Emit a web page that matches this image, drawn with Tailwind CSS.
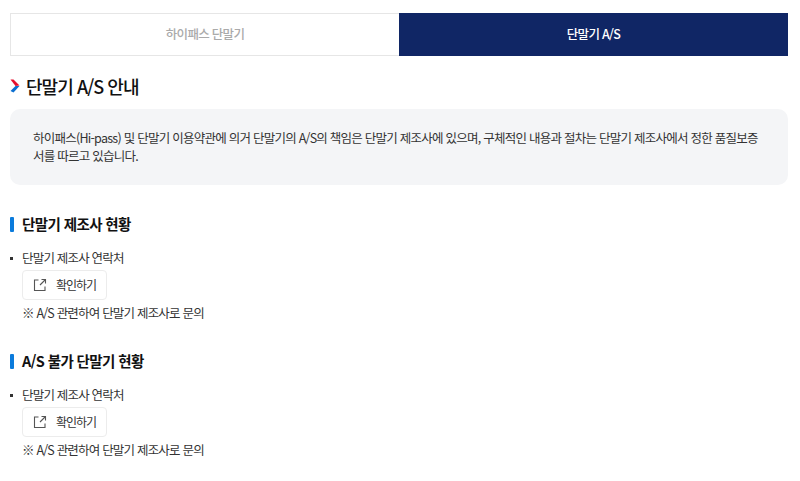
<!DOCTYPE html>
<html lang="ko">
<head>
    <meta charset="UTF-8">
    <title>단말기 A/S</title>
    <script src="https://cdn.jsdelivr.net/npm/@tailwindcss/browser@4"></script>
</head>
<body class="bg-white font-['Noto_Sans_CJK_KR','Noto_Sans',sans-serif] text-[#222] overflow-hidden">
    <div class="pl-[10px] pr-[12px] pt-[13px]">
        <!-- tabs -->
        <div class="flex h-[43px] text-[12.5px] font-medium tracking-[-0.7px]">
            <div class="w-1/2 flex items-center justify-center border border-[#e6e6e6] border-r-0 text-[#aaa]">하이패스 단말기</div>
            <div class="w-1/2 flex items-center justify-center bg-[#102665] text-white">단말기 A/S</div>
        </div>

        <!-- page title -->
        <div class="flex items-center gap-[6px] mt-[17px] h-[26px]">
            <svg width="10" height="14" viewBox="0 0 10 14" class="shrink-0">
                <path d="M0.5 0.5 L3.5 0.5 L9.5 6.5 L5.5 7 Z" fill="#e60f2d"/>
                <path d="M5.5 7 L9.5 7 L3.5 13.5 L0.5 12 Z" fill="#0b6fd0"/>
            </svg>
            <h1 class="text-[18px] font-medium tracking-[-0.95px] text-[#111]">단말기 A/S 안내</h1>
        </div>

        <!-- notice -->
        <div class="mt-[10px] h-[76px] rounded-[10px] bg-[#f4f5f7] pl-[23px] pr-[28px] pt-[20px] text-[12.5px] leading-[18px] tracking-[-0.75px] text-[#333]">
            하이패스(Hi-pass) 및 단말기 이용약관에 의거 단말기의 A/S의 책임은 단말기 제조사에 있으며, 구체적인 내용과 절차는 단말기 제조사에서 정한 품질보증서를 따르고 있습니다.
        </div>

        <!-- section 1 -->
        <section class="mt-[29px]">
            <h2 class="flex items-center gap-[8px] h-[20px] text-[14.5px] font-bold tracking-[-0.6px] text-[#111]">
                <span class="w-[4px] h-[15px] rounded-[1px] bg-[#0b7bdc]"></span>단말기 제조사 현황
            </h2>
            <ul class="mt-[14px] text-[12.5px] tracking-[-0.8px] text-[#333]">
                <li class="relative pl-[12px] leading-[20px]">
                    <span class="absolute left-0 top-[9px] w-[3px] h-[3px] bg-[#333]"></span>단말기 제조사 연락처
                    <a class="mt-[2px] flex items-center w-[85px] h-[30px] rounded-[4px] border border-[#ececec] pl-[10px] gap-[9px]">
                        <svg width="14" height="14" viewBox="0 0 14 14" fill="none" stroke="#555" stroke-width="1.1">
                            <path d="M5.5 2H1.5V12.5H12V8.5"/>
                            <path d="M8.5 1.5H12.5V5.5M12.5 1.5L7 7"/>
                        </svg>
                        <span class="text-[12px] tracking-[-1px]">확인하기</span>
                    </a>
                    <p class="mt-[3px]">※ A/S 관련하여 단말기 제조사로 문의</p>
                </li>
            </ul>
        </section>

        <!-- section 2 -->
        <section class="mt-[28px]">
            <h2 class="flex items-center gap-[8px] h-[20px] text-[14.5px] font-bold tracking-[-0.6px] text-[#111]">
                <span class="w-[4px] h-[15px] rounded-[1px] bg-[#0b7bdc]"></span>A/S 불가 단말기 현황
            </h2>
            <ul class="mt-[14px] text-[12.5px] tracking-[-0.8px] text-[#333]">
                <li class="relative pl-[12px] leading-[20px]">
                    <span class="absolute left-0 top-[9px] w-[3px] h-[3px] bg-[#333]"></span>단말기 제조사 연락처
                    <a class="mt-[2px] flex items-center w-[85px] h-[30px] rounded-[4px] border border-[#ececec] pl-[10px] gap-[9px]">
                        <svg width="14" height="14" viewBox="0 0 14 14" fill="none" stroke="#555" stroke-width="1.1">
                            <path d="M5.5 2H1.5V12.5H12V8.5"/>
                            <path d="M8.5 1.5H12.5V5.5M12.5 1.5L7 7"/>
                        </svg>
                        <span class="text-[12px] tracking-[-1px]">확인하기</span>
                    </a>
                    <p class="mt-[3px]">※ A/S 관련하여 단말기 제조사로 문의</p>
                </li>
            </ul>
        </section>
    </div>
</body>
</html>
